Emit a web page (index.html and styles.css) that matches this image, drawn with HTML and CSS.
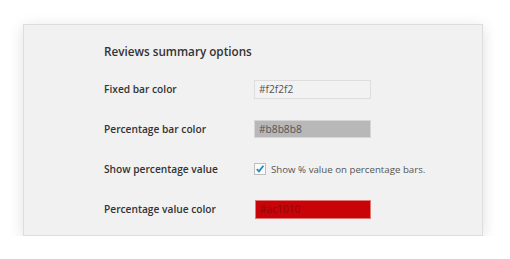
FILE: index.html
```html
<!DOCTYPE html>
<html lang="en">

<head>
  <meta charset="utf-8">
  <title>Reviews summary options</title>
  <meta name="viewport" content="width=device-width, initial-scale=1.0">
  <link rel="stylesheet" href="styles.css">
</head>

<body>
  <div class="panel">
    <h2>Reviews summary options</h2>
    <div class="options">
      <label class="label" for="fixed_color">Fixed bar color</label>
      <div class="field">
        <input class="color-input fixed" type="text" id="fixed_color" value="#f2f2f2">
      </div>

      <label class="label" for="percent_color">Percentage bar color</label>
      <div class="field">
        <input class="color-input percent" type="text" id="percent_color" value="#b8b8b8">
      </div>

      <span class="label">Show percentage value</span>
      <div class="field">
        <label class="check">
          <span class="box">
            <svg width="10" height="10" viewBox="0 0 10 10">
              <path d="M1.8 5.2 L4 7.4 L8.4 1.8" fill="none" stroke="#1e8cbe" stroke-width="1.8"/>
            </svg>
          </span>
          Show % value on percentage bars.
        </label>
      </div>

      <label class="label" for="value_color">Percentage value color</label>
      <div class="field">
        <input class="color-input value" type="text" id="value_color" value="#ac1010">
      </div>
    </div>
  </div>
</body>

</html>
```

FILE: styles.css
```css
:root {
  --panel-bg: rgb(241, 241, 241);
  --panel-border: rgb(221, 221, 221);
  --label-color: rgb(51, 51, 51);
  --text-color: rgb(85, 85, 85);
}

* {
  box-sizing: border-box;
}

body {
  margin: 0;
  background-color: white;
  font-family: "Open Sans", "Liberation Sans", sans-serif;
}

.panel {
  margin: 24px 0 0 23px;
  width: 460px;
  height: 212px;
  background-color: var(--panel-bg);
  border: 1px solid var(--panel-border);
  box-shadow: 0 3px 14px rgba(0, 0, 0, 0.13);
  padding: 17px 0 0 80px;
}

h2 {
  margin: 0 0 9px 0;
  font-size: 11.7px;
  line-height: 18px;
  font-weight: 600;
  color: var(--label-color);
}

.options {
  display: grid;
  grid-template-columns: 150px auto;
  grid-auto-rows: 40px;
}

.label {
  display: flex;
  align-items: center;
  font-size: 10.2px;
  font-weight: 600;
  color: var(--label-color);
}

.field {
  display: flex;
  align-items: center;
}

.color-input {
  width: 117px;
  height: 19px;
  margin: 0;
  padding: 0 4px;
  border: 1px solid var(--panel-border);
  font-family: inherit;
  font-size: 10.2px;
  color: var(--text-color);
  outline: none;
}

.fixed {
  background-color: rgb(242, 242, 242);
}

.percent {
  height: 18px;
  background-color: rgb(184, 184, 184);
  border-color: rgb(214, 214, 214);
}

.value {
  width: 116px;
  margin-left: 1px;
  background-color: rgb(200, 4, 8);
  border-color: rgb(224, 120, 120);
  color: rgb(140, 8, 10);
}

.check {
  display: flex;
  align-items: center;
  gap: 5px;
  font-size: 9.7px;
  color: var(--text-color);
}

.box {
  width: 12px;
  height: 12px;
  display: flex;
  align-items: center;
  justify-content: center;
  background-color: rgb(250, 250, 250);
  border: 1px solid rgb(190, 190, 190);
}
```
